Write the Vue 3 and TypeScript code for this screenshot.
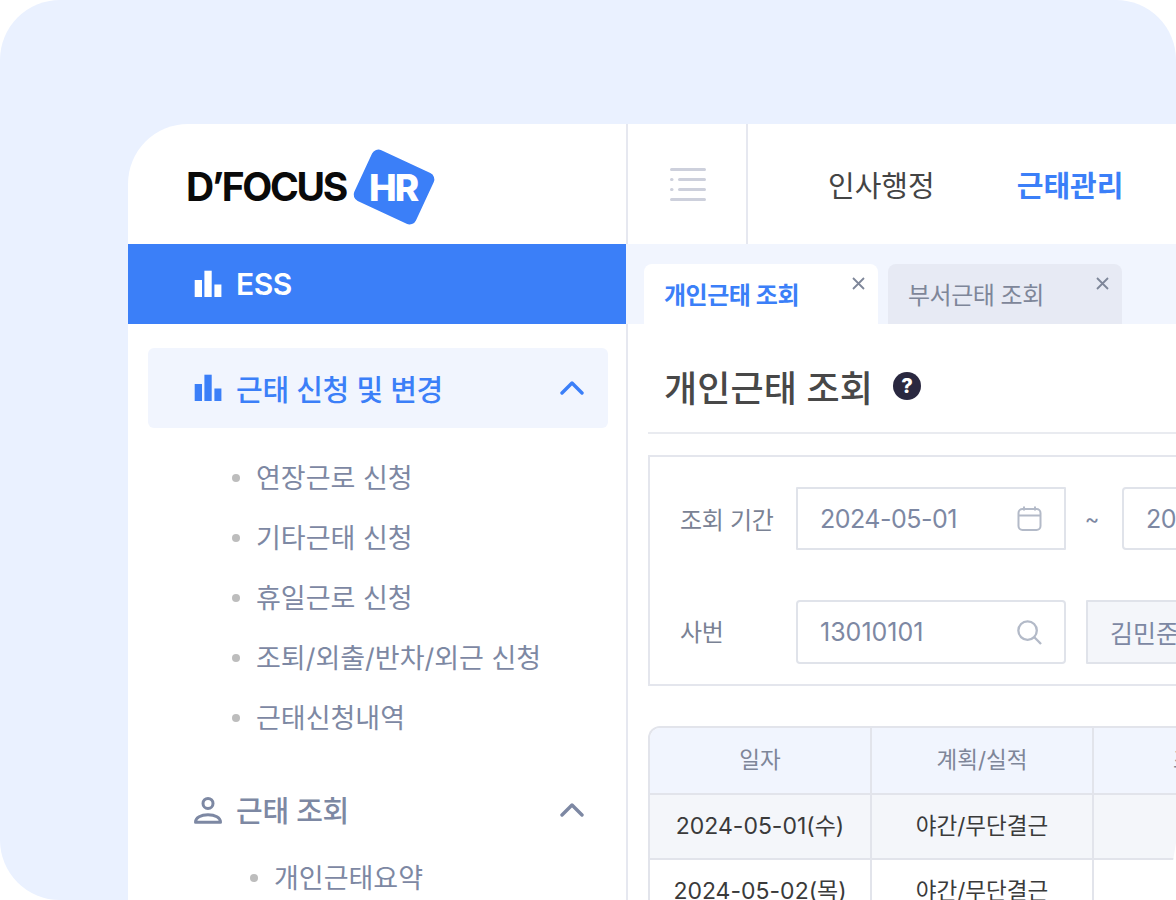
<template>
  <div class="stage">
    <div class="window">
      <aside class="sidebar">
        <div class="logo">
          <span class="logo__name">D’FOCUS</span>
          <span class="logo__mark">
            <span class="logo__badge"></span>
            <span class="logo__hr">HR</span>
          </span>
        </div>
        <div class="ess">
          <svg class="side-icon" viewBox="0 0 28 28" fill="#fff">
            <rect x="0.7" y="10" width="7.3" height="17" />
            <rect x="10.4" y="0.7" width="7.3" height="26.3" />
            <rect x="20.4" y="14.5" width="7" height="12.5" />
          </svg>
          <span>ESS</span>
        </div>
        <nav class="side-nav">
          <div class="group-head group-head--active">
            <svg class="side-icon" viewBox="0 0 28 28" fill="#3b7ff8">
              <rect x="0.7" y="10" width="7.3" height="17" />
              <rect x="10.4" y="0.7" width="7.3" height="26.3" />
              <rect x="20.4" y="14.5" width="7" height="12.5" />
            </svg>
            <span class="group-head__label">근태 신청 및 변경</span>
            <svg class="chevron" viewBox="0 0 24 14" fill="none" stroke="currentColor">
              <polyline points="2,12 12,2 22,12" />
            </svg>
          </div>
          <ul class="sub-list">
            <li v-for="item in requestItems" :key="item" class="sub-item">{{ item }}</li>
          </ul>
          <div class="group-head group-head--second">
            <svg class="side-icon" viewBox="0 0 28 28" fill="none" stroke="#7d88a3" stroke-width="3">
              <circle cx="14" cy="7.4" r="5" />
              <path d="M1.5 26.2c0-4.6 5.4-7.4 12.5-7.4s12.5 2.8 12.5 7.4z" stroke-linejoin="round" />
            </svg>
            <span class="group-head__label">근태 조회</span>
            <svg class="chevron" viewBox="0 0 24 14" fill="none" stroke="currentColor">
              <polyline points="2,12 12,2 22,12" />
            </svg>
          </div>
          <ul class="sub-list sub-list--deep">
            <li class="sub-item">개인근태요약</li>
          </ul>
        </nav>
      </aside>

      <main class="main">
        <header class="topbar">
          <div class="burger">
            <svg width="36" height="33" viewBox="0 0 36 33" fill="#cdd0dc">
              <rect x="0" y="0" width="36" height="3" rx="1.5" />
              <rect x="0" y="10" width="3.5" height="3" rx="1.5" />
              <rect x="8" y="10" width="28" height="3" rx="1.5" />
              <rect x="0" y="20" width="3.5" height="3" rx="1.5" />
              <rect x="8" y="20" width="28" height="3" rx="1.5" />
              <rect x="0" y="30" width="36" height="3" rx="1.5" />
            </svg>
          </div>
          <div class="topmenu">
            <span class="topmenu__item">인사행정</span>
            <span class="topmenu__item topmenu__item--active">근태관리</span>
          </div>
        </header>

        <div class="tabs">
          <div v-for="tab in tabs" :key="tab.label" class="tab" :class="{ 'tab--active': tab.active }">
            <span>{{ tab.label }}</span>
            <svg class="tab__close" viewBox="0 0 13 13" fill="none" stroke="#7e8699" stroke-width="1.8">
              <path d="M1 1l11 11M12 1L1 12" />
            </svg>
          </div>
        </div>

        <div class="content">
          <div class="title-row">
            <h1 class="title">개인근태 조회</h1>
            <span class="help">?</span>
          </div>

          <section class="filter">
            <div class="filter__row">
              <label class="filter__label">조회 기간</label>
              <div class="field field--date">
                <span>2024-05-01</span>
                <svg class="field__icon" viewBox="0 0 24 25" fill="none" stroke="#b3bac8" stroke-width="2">
                  <rect x="1" y="3" width="22" height="21" rx="4" />
                  <path d="M1 9.5h22M6.5 0.5v4M17.5 0.5v4" />
                </svg>
              </div>
              <span class="filter__tilde">~</span>
              <div class="field field--date field--round"><span>2024-05-31</span></div>
            </div>
            <div class="filter__row filter__row--second">
              <label class="filter__label">사번</label>
              <div class="field field--round">
                <span>13010101</span>
                <svg class="field__icon" viewBox="0 0 26 26" fill="none" stroke="#b3bac8" stroke-width="2.4">
                  <circle cx="11" cy="11" r="9.6" />
                  <path d="M18 18l7 7" />
                </svg>
              </div>
              <div class="field field--readonly"><span>김민준</span></div>
            </div>
          </section>

          <div class="table-wrap">
            <table class="table">
              <thead>
                <tr>
                  <th v-for="head in heads" :key="head">{{ head }}</th>
                </tr>
              </thead>
              <tbody>
                <tr v-for="row in rows" :key="row.date">
                  <td class="table__date">{{ row.date }}</td>
                  <td>{{ row.status }}</td>
                  <td></td>
                </tr>
              </tbody>
            </table>
            <span class="table-wrap__notch"></span>
          </div>
        </div>
      </main>
    </div>
  </div>
</template>

<script setup lang="ts">
const requestItems = [
  '연장근로 신청',
  '기타근태 신청',
  '휴일근로 신청',
  '조퇴/외출/반차/외근 신청',
  '근태신청내역'
];

const tabs = [
  { label: '개인근태 조회', active: true },
  { label: '부서근태 조회', active: false }
];

const heads = ['일자', '계획/실적', '조퇴일'];

const rows = [
  { date: '2024-05-01(수)', status: '야간/무단결근' },
  { date: '2024-05-02(목)', status: '야간/무단결근' }
];
</script>

<style scoped>
.stage {
  box-sizing: border-box;
  height: 900px;
  padding: 124px 0 0 128px;
  background: #eaf1ff;
  border-radius: 60px 60px 0 60px;
  overflow: hidden;
  font-family: Inter, "Noto Sans CJK KR", sans-serif;
}

.window {
  display: flex;
  height: 776px;
  background: #fff;
  border-top-left-radius: 60px;
  overflow: hidden;
}

.sidebar {
  flex: none;
  width: 500px;
  display: flex;
  flex-direction: column;
}

.logo {
  flex: none;
  box-sizing: border-box;
  height: 120px;
  display: flex;
  align-items: center;
  padding: 4px 0 0 58px;
  border-right: 2px solid #e6e8f0;
}

.logo__name {
  font-size: 39px;
  font-weight: 700;
  letter-spacing: -2.3px;
  color: #0a0a0a;
}

.logo__mark {
  position: relative;
  box-sizing: border-box;
  width: 86px;
  height: 80px;
  display: flex;
  align-items: center;
  justify-content: center;
  padding: 2px 0 0 8px;
}

.logo__badge {
  position: absolute;
  left: 14px;
  top: 13px;
  width: 68px;
  height: 56px;
  border-radius: 7px;
  background: #3b7ff8;
  transform: rotate(25deg);
}

.logo__hr {
  position: relative;
  font-size: 37px;
  font-weight: 800;
  letter-spacing: -2px;
  color: #fff;
}

.ess {
  flex: none;
  box-sizing: border-box;
  height: 80px;
  display: flex;
  align-items: center;
  gap: 14px;
  padding-left: 66px;
  background: #3b7ff8;
  border-right: 2px solid #f1f5fe;
  color: #fff;
  font-size: 30px;
  font-weight: 600;
  letter-spacing: -0.5px;
}

.side-icon {
  flex: none;
  width: 28px;
  height: 28px;
}

.side-nav {
  flex: 1;
  padding: 24px 18px 0 20px;
  border-right: 2px solid #e6e8f0;
}

.group-head {
  display: flex;
  align-items: center;
  gap: 14px;
  height: 80px;
  padding: 0 24px 0 46px;
  color: #7d88a3;
  font-size: 29px;
  font-weight: 500;
}

.group-head--active {
  background: #f1f5fe;
  border-radius: 6px;
  color: #3b7ff8;
}

.group-head--second {
  height: 74px;
  margin-top: 26px;
}

.group-head__label {
  flex: 1;
  letter-spacing: -0.3px;
}

.group-head--second .group-head__label {
  padding-bottom: 3px;
}

.chevron {
  flex: none;
  width: 24px;
  height: 14px;
  stroke-width: 3.4;
  stroke-linecap: round;
  stroke-linejoin: round;
}

.sub-list {
  list-style: none;
  margin: 19px 0 0;
  padding: 0 0 0 108px;
}

.sub-list--deep {
  margin-top: 0;
  padding-left: 126px;
}

.sub-item {
  position: relative;
  height: 60px;
  line-height: 63px;
  color: #7d88a3;
  font-size: 27px;
}

.sub-item::before {
  content: "";
  position: absolute;
  left: -24px;
  top: 27px;
  width: 8px;
  height: 8px;
  border-radius: 50%;
  background: #bdbdbd;
}

.main {
  flex: none;
  width: 1000px;
  display: flex;
  flex-direction: column;
}

.topbar {
  flex: none;
  height: 120px;
  display: flex;
}

.burger {
  flex: none;
  box-sizing: border-box;
  width: 120px;
  display: flex;
  align-items: center;
  justify-content: center;
  padding: 0 0 0 2px;
  border-right: 2px solid #e6e8f0;
}

.topmenu {
  display: flex;
  align-items: center;
  gap: 82px;
  padding-left: 80px;
}

.topmenu__item {
  font-size: 29px;
  color: #444;
}

.topmenu__item--active {
  color: #3b7ff8;
  font-weight: 600;
}

.tabs {
  flex: none;
  box-sizing: border-box;
  height: 80px;
  display: flex;
  align-items: flex-end;
  gap: 10px;
  padding-left: 16px;
  background: #f1f5fe;
}

.tab {
  position: relative;
  box-sizing: border-box;
  width: 234px;
  height: 60px;
  padding: 0 0 0 20px;
  line-height: 63px;
  border-radius: 8px 8px 0 0;
  background: #e7eaf4;
  color: #7e8699;
  font-size: 24px;
  letter-spacing: -0.5px;
}

.tab--active {
  background: #fff;
  color: #3b7ff8;
  font-weight: 600;
}

.tab__close {
  position: absolute;
  top: 13px;
  right: 13px;
  width: 13px;
  height: 13px;
}

.content {
  flex: 1;
  padding-left: 20px;
}

.title-row {
  box-sizing: border-box;
  height: 110px;
  display: flex;
  align-items: center;
  gap: 20px;
  padding: 16px 0 0 16px;
  border-bottom: 2px solid #e9ebf0;
}

.title {
  margin: 0;
  font-size: 36px;
  font-weight: 500;
  letter-spacing: 0.1px;
  color: #484848;
}

.help {
  width: 28px;
  height: 28px;
  border-radius: 50%;
  background: #2a2840;
  color: #fff;
  font-size: 20px;
  font-weight: 800;
  line-height: 28px;
  text-align: center;
}

.filter {
  box-sizing: border-box;
  height: 231px;
  margin-top: 21px;
  padding: 30px 0 0 30px;
  border: 2px solid #e4e6ed;
}

.filter__row {
  display: flex;
  align-items: center;
  height: 63px;
}

.filter__row--second {
  height: 64px;
  margin-top: 50px;
}

.filter__label {
  flex: none;
  width: 116px;
  font-size: 24px;
  letter-spacing: -0.3px;
  color: #7a8294;
}

.filter__row--second .filter__label {
  padding-bottom: 4px;
}

.field {
  flex: none;
  box-sizing: border-box;
  width: 270px;
  height: 100%;
  display: flex;
  align-items: center;
  justify-content: space-between;
  padding: 0 22px;
  border: 2px solid #e0e3ea;
  border-radius: 1px;
  color: #7d88a3;
  font-size: 25px;
}

.field--date {
  letter-spacing: -0.5px;
}

.field--round {
  border-radius: 4px;
}

.field--readonly {
  margin-left: 20px;
  background: #f4f6fa;
}

.filter__tilde {
  flex: none;
  box-sizing: border-box;
  width: 56px;
  padding-right: 4px;
  text-align: center;
  color: #7d88a3;
  font-size: 22px;
}

.field__icon {
  flex: none;
  width: 25px;
  height: 25px;
}

.table-wrap {
  position: relative;
  margin-top: 40px;
  border: 2px solid #e2e4eb;
  border-bottom: 0;
  border-top-left-radius: 12px;
  overflow: hidden;
}

.table {
  width: 666px;
  table-layout: fixed;
  border-collapse: separate;
  border-spacing: 0;
}

.table th,
.table td {
  box-sizing: border-box;
  padding: 0 0 5px;
  border-right: 2px solid #e2e4eb;
  border-bottom: 2px solid #e2e4eb;
  text-align: center;
  font-size: 22.5px;
  color: #3a3a3a;
}

.table th {
  height: 67px;
  background: #f1f5fe;
  color: #7e8699;
  font-weight: 400;
}

.table td {
  height: 65px;
}

.table tbody tr:first-child td {
  background: #f4f6fa;
}

.table .table__date {
  font-size: 23px;
}

.table-wrap__notch {
  position: absolute;
  left: 523px;
  top: 115px;
  width: 3px;
  height: 18px;
  background: #fff;
  clip-path: polygon(100% 0, 0 100%, 100% 100%);
}
</style>

<style>
html,
body {
  margin: 0;
  background: #fff;
  overflow: hidden;
}
</style>
